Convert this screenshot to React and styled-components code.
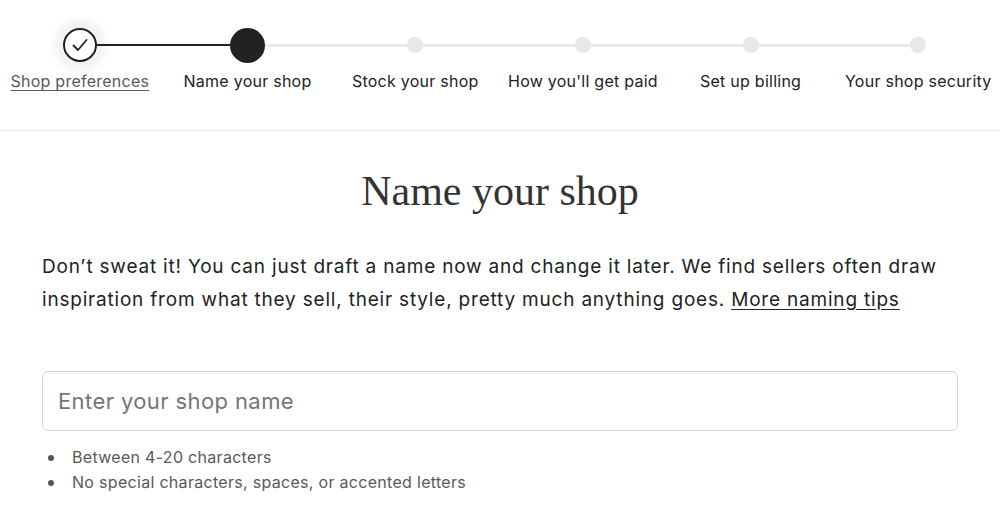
import React from "react";
import styled, { createGlobalStyle, css } from "styled-components";

const GlobalStyle = createGlobalStyle`
  * { box-sizing: border-box; }
  body {
    margin: 0;
    background: #ffffff;
    color: #222222;
    font-family: Inter, "Noto Sans", sans-serif;
  }
`;

const steps = [
  { label: "Shop preferences", state: "done" },
  { label: "Name your shop", state: "current" },
  { label: "Stock your shop", state: "todo" },
  { label: "How you'll get paid", state: "todo" },
  { label: "Set up billing", state: "todo" },
  { label: "Your shop security", state: "todo" },
];

const Header = styled.header`
  height: 131px;
  border-bottom: 1px solid #e8e8e8;
  padding-top: 25px;
  overflow: hidden;
`;

const Stepper = styled.ol`
  display: grid;
  grid-template-columns: repeat(6, 167.7px);
  margin: 0 0 0 -4px;
  padding: 0;
  list-style: none;
`;

const Step = styled.li`
  display: flex;
  flex-direction: column;
  align-items: center;
`;

const Track = styled.div`
  display: flex;
  align-items: center;
  width: 100%;
  height: 40px;
`;

const Line = styled.span`
  flex: 1;
  height: ${(p) => (p.$tone === "dark" ? "2px" : "3px")};
  background: ${(p) =>
    p.$tone === "dark" ? "#222222" : p.$tone === "light" ? "#e9e9e9" : "transparent"};
`;

const markerStyles = {
  done: css`
    width: 34px;
    height: 34px;
    border: 2px solid #222222;
    background: #ffffff;
    box-shadow: 0 0 6px 9px #f3f3f3;
  `,
  current: css`
    width: 35px;
    height: 35px;
    background: #222222;
  `,
  todo: css`
    width: 16px;
    height: 16px;
    background: #e8e8e8;
  `,
};

const Marker = styled.span`
  flex: none;
  display: flex;
  align-items: center;
  justify-content: center;
  border-radius: 50%;
  ${(p) => markerStyles[p.$state]}
`;

const StepLabel = styled.span`
  margin-top: 4px;
  font-size: 16px;
  line-height: 24px;
  letter-spacing: 0.25px;
  white-space: nowrap;
  color: ${(p) => (p.$state === "done" ? "#595959" : "#222222")};
  text-decoration: ${(p) => (p.$state === "done" ? "underline" : "none")};
  text-underline-offset: 3px;
`;

const Main = styled.main`
  padding: 35px 42px 0;
`;

const Title = styled.h1`
  margin: 0;
  text-align: center;
  font-family: "Liberation Serif", "DejaVu Serif", serif;
  font-weight: 400;
  font-size: 42px;
  line-height: 50px;
  color: #333333;
`;

const Intro = styled.p`
  margin: 34px 0 0;
  font-size: 19px;
  line-height: 33px;
  letter-spacing: 0.8px;
  color: #222222;
`;

const Link = styled.a`
  color: #222222;
  text-decoration: underline;
  text-underline-offset: 3px;
`;

const Field = styled.input`
  display: block;
  width: 100%;
  height: 60px;
  margin-top: 55px;
  padding: 0 15px;
  border: 1px solid #d6d6d6;
  border-radius: 6px;
  box-shadow: inset 0 1px 2px rgba(0, 0, 0, 0.04);
  font-family: inherit;
  font-size: 22px;
  letter-spacing: 0.4px;
  color: #222222;
  outline: none;
  &::placeholder {
    color: #767676;
  }
`;

const Rules = styled.ul`
  margin: 14px 0 0;
  padding: 0;
  list-style: none;
`;

const Rule = styled.li`
  display: flex;
  align-items: center;
  gap: 18px;
  padding-left: 6px;
  font-size: 16px;
  line-height: 25px;
  letter-spacing: 0.3px;
  color: #595959;
  &::before {
    content: "";
    width: 6px;
    height: 6px;
    border-radius: 50%;
    background: #555555;
  }
`;

const Check = () => (
  <svg width="22" height="22" viewBox="0 0 22 22" fill="none">
    <path d="M4.5 11.5l4.5 4.5 8.5-10" stroke="#222222" strokeWidth="1.8" strokeLinecap="round" strokeLinejoin="round" />
  </svg>
);

const lineTone = (i, side) => {
  if (side === "left" && i === 0) return "none";
  if (side === "right" && i === steps.length - 1) return "none";
  const seg = side === "left" ? i - 1 : i;
  return seg === 0 ? "dark" : "light";
};

export default function App() {
  return (
    <>
      <GlobalStyle />
      <Header>
        <Stepper>
          {steps.map((s, i) => (
            <Step key={s.label}>
              <Track>
                <Line $tone={lineTone(i, "left")} />
                <Marker $state={s.state}>{s.state === "done" && <Check />}</Marker>
                <Line $tone={lineTone(i, "right")} />
              </Track>
              <StepLabel $state={s.state}>{s.label}</StepLabel>
            </Step>
          ))}
        </Stepper>
      </Header>
      <Main>
        <Title>Name your shop</Title>
        <Intro>
          Don’t sweat it! You can just draft a name now and change it later. We find sellers
          often draw inspiration from what they sell, their style, pretty much anything goes.{" "}
          <Link href="#">More naming tips</Link>
        </Intro>
        <Field placeholder="Enter your shop name" />
        <Rules>
          <Rule>Between 4-20 characters</Rule>
          <Rule>No special characters, spaces, or accented letters</Rule>
        </Rules>
      </Main>
    </>
  );
}
